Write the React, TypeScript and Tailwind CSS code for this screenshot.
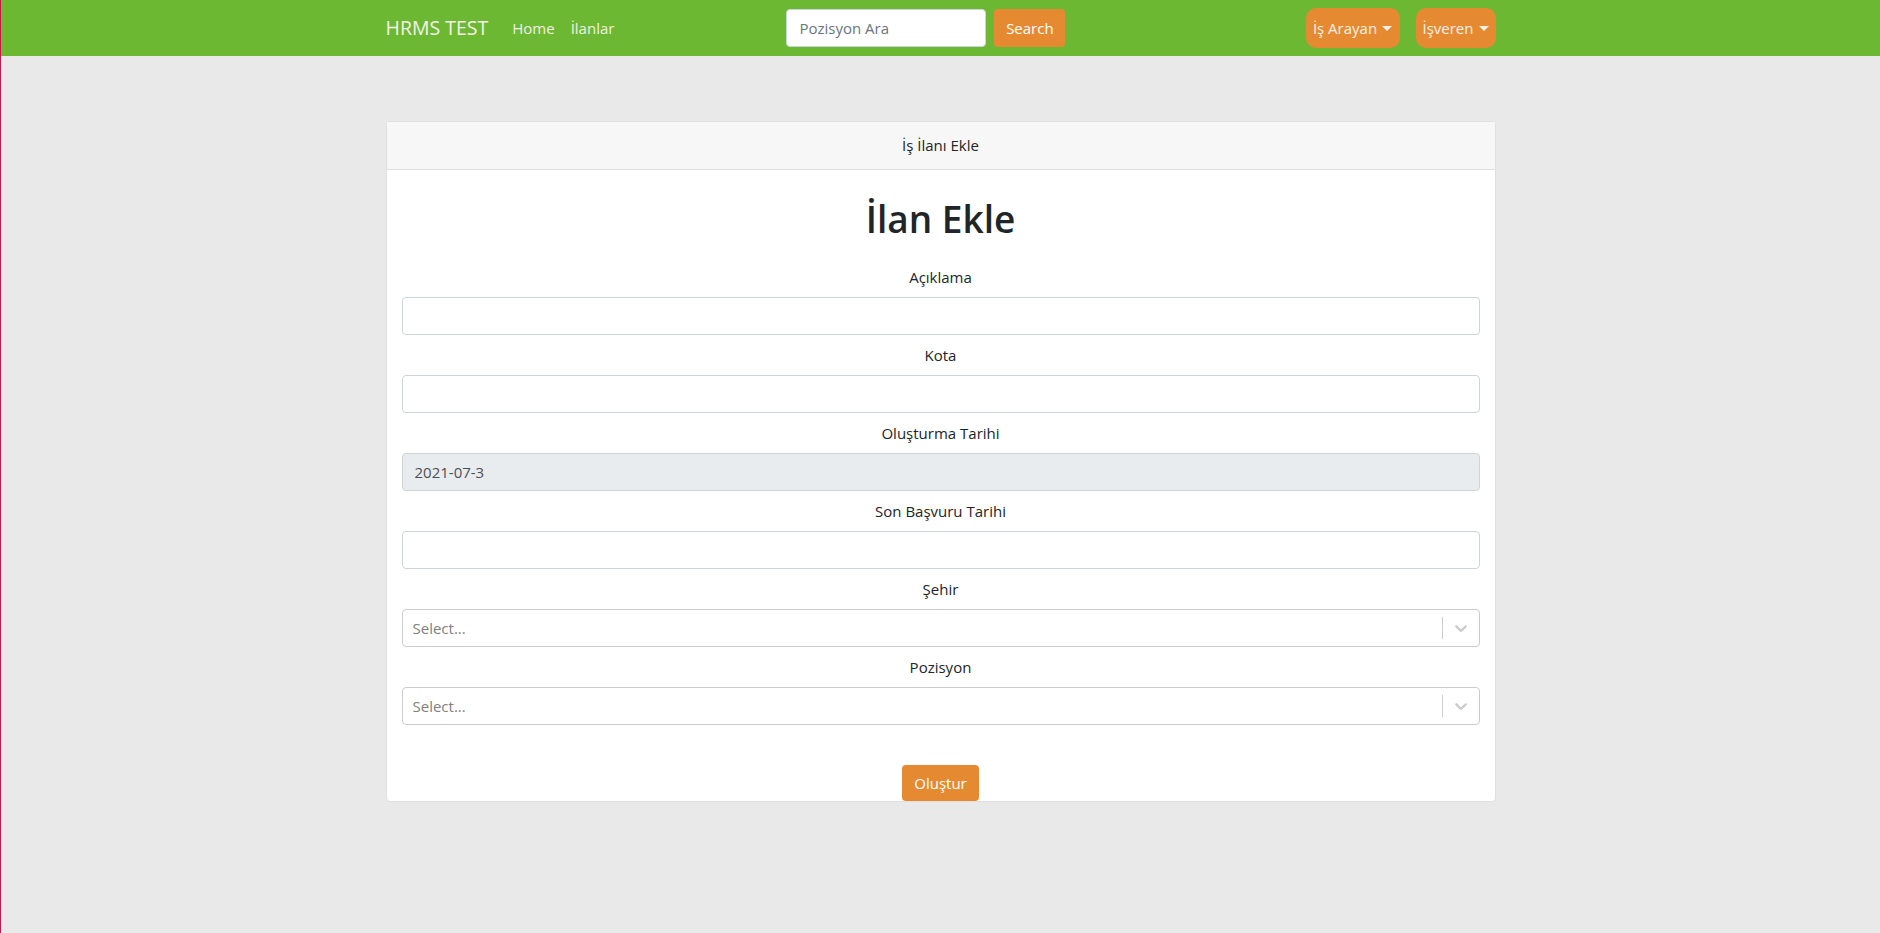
import { useState } from 'react'

const fieldCls =
  'block w-full h-[38px] rounded-[4px] border border-[#ced4da] bg-white px-3 text-[15px] text-[#495057] outline-none'

const Chevron = () => (
  <svg viewBox="0 0 20 20" className="h-5 w-5 fill-[#cccccc]">
    <path d="M4.516 7.548c0.436-0.446 1.043-0.481 1.576 0l3.908 3.747 3.908-3.747c0.533-0.481 1.141-0.446 1.574 0 0.436 0.445 0.408 1.197 0 1.615-0.406 0.418-4.695 4.502-4.695 4.502-0.217 0.223-0.502 0.335-0.787 0.335s-0.57-0.112-0.789-0.335c0 0-4.287-4.084-4.695-4.502s-0.436-1.170 0-1.615z" />
  </svg>
)

const SelectBox = () => (
  <div className="flex h-[38px] w-full items-center rounded-[4px] border border-[#cccccc] bg-white">
    <div className="flex-1 pl-[10px] text-[15px] text-[#808080]">Select...</div>
    <span className="my-2 h-[22px] w-px bg-[#cccccc]" />
    <div className="p-2">
      <Chevron />
    </div>
  </div>
)

const Caret = () => (
  <span className="ml-[5px] inline-block h-0 w-0 border-x-[5px] border-t-[5px] border-x-transparent border-t-[#f5f1e6] align-middle" />
)

const Field = ({ label, children }: { label: string; children: React.ReactNode }) => (
  <div className="mt-2 first:mt-0">
    <label className="mb-2 block text-center text-[15px] leading-6 text-[#212529]">
      {label}
    </label>
    {children}
  </div>
)

const App = () => {
  const [aciklama, setAciklama] = useState('')
  const [kota, setKota] = useState('')
  const [sonTarih, setSonTarih] = useState('')

  return (
    <div className="min-h-screen border-l border-[#c8174a] bg-[#e9e9e9] font-['Open_Sans','Noto_Sans',sans-serif] text-[#212529]">
      <nav className="h-14 bg-[#6db833]">
        <div className="mx-auto flex h-14 w-[1140px] items-center px-[15px]">
          <a className="mr-4 text-[19.5px] leading-[30px] text-[#f5f3ea]">HRMS TEST</a>
          <ul className="flex text-[15px] text-[#f2f0e4]">
            <li className="px-2">Home</li>
            <li className="px-2">İlanlar</li>
          </ul>
          <form className="ml-[164px] flex items-center gap-2" onSubmit={(e) => e.preventDefault()}>
            <input
              className="h-[38px] w-[200px] rounded-[4px] border border-[#ced4da] bg-white px-3 text-[15px] text-[#495057] outline-none placeholder:text-[#6c757d]"
              placeholder="Pozisyon Ara"
            />
            <button className="h-[38px] w-[71px] rounded-[4px] bg-[#e68a32] text-[15px] text-white">
              Search
            </button>
          </form>
          <div className="ml-auto flex gap-4">
            <button className="flex h-10 w-[94px] items-center justify-center rounded-[10px] bg-[#e68a32] text-[15px] text-[#f5f1e6]">
              İş Arayan
              <Caret />
            </button>
            <button className="flex h-10 w-[80px] items-center justify-center rounded-[10px] bg-[#e68a32] text-[15px] text-[#f5f1e6]">
              İşveren
              <Caret />
            </button>
          </div>
        </div>
      </nav>

      <div className="mx-auto w-[1140px] px-[15px] pt-[65px]">
        <div className="rounded-[4px] border border-[#dfdfdf] bg-white">
          <div className="flex h-12 items-center justify-center border-b border-[#dfdfdf] bg-[#f7f7f7] text-[15px]">
            İş İlanı Ekle
          </div>
          <div className="px-[15px] pt-[25px]">
            <h1 className="mb-[22px] text-center text-[37px] font-semibold leading-[48px] text-[#212529]">
              İlan Ekle
            </h1>
            <Field label="Açıklama">
              <input className={fieldCls} value={aciklama} onChange={(e) => setAciklama(e.target.value)} />
            </Field>
            <Field label="Kota">
              <input className={fieldCls} value={kota} onChange={(e) => setKota(e.target.value)} />
            </Field>
            <Field label="Oluşturma Tarihi">
              <input className={fieldCls + ' !bg-[#e9ecef]'} value="2021-07-3" disabled />
            </Field>
            <Field label="Son Başvuru Tarihi">
              <input className={fieldCls} value={sonTarih} onChange={(e) => setSonTarih(e.target.value)} />
            </Field>
            <Field label="Şehir">
              <SelectBox />
            </Field>
            <Field label="Pozisyon">
              <SelectBox />
            </Field>
            <div className="mt-10 flex justify-center">
              <button className="h-[36px] rounded-[4px] bg-[#e68a32] px-3 text-[15px] text-white">
                Oluştur
              </button>
            </div>
          </div>
        </div>
      </div>
    </div>
  )
}

export default App
